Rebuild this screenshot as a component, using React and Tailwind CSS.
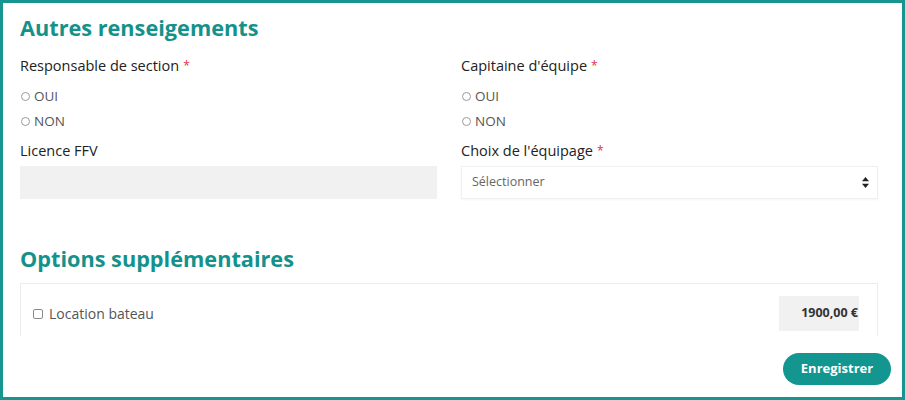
const font = { fontFamily: '"Open Sans", "Liberation Sans", sans-serif' };

const Required = () => <span className="ml-1 text-[#e0304a] text-[12px] align-top">*</span>;

const Radio = ({ label }) => (
  <label className="flex h-[25px] items-center gap-[4px] pl-[1px] text-[13.5px] text-[#555]">
    <span className="h-[9px] w-[9px] rounded-full border border-[#9a9a9a] bg-white" />
    {label}
  </label>
);

const Field = ({ title, required, children }) => (
  <div className="flex flex-col">
    <div className="h-[20px] text-[14.5px] leading-[20px] font-medium text-[#222]">
      {title}
      {required && <Required />}
    </div>
    {children}
  </div>
);

export default function App() {
  return (
    <div
      style={font}
      className="h-[400px] w-[905px] overflow-hidden border-[3px] border-[#17968f] bg-white"
    >
      <div className="pl-[17px] pr-[24px] pt-[12px]">
        <h2 className="text-[21.7px] leading-[26px] font-bold text-[#14918b]">Autres renseigements</h2>

        <div className="mt-[15px] grid grid-cols-2 gap-x-[24px]">
          <div className="flex flex-col">
            <Field title="Responsable de section" required>
              <div className="mt-[8px]">
                <Radio label="OUI" />
                <Radio label="NON" />
              </div>
            </Field>
            <div className="mt-[7px]">
              <Field title="Licence FFV">
                <input className="mt-[5px] h-[33px] w-full bg-[#f1f1f1] outline-none" />
              </Field>
            </div>
          </div>

          <div className="flex flex-col">
            <Field title="Capitaine d'équipe" required>
              <div className="mt-[8px]">
                <Radio label="OUI" />
                <Radio label="NON" />
              </div>
            </Field>
            <div className="mt-[7px]">
              <Field title="Choix de l'équipage" required>
                <div className="mt-[5px] flex h-[33px] items-center justify-between border border-[#f0f0f0] bg-white pl-[10px] pr-[8px] shadow-[0_1px_2px_rgba(0,0,0,0.04)]">
                  <span className="text-[12.5px] text-[#666]">Sélectionner</span>
                  <svg width="7" height="11" viewBox="0 0 7 11">
                    <path d="M3.5 0 L7 4.2 L0 4.2 Z" fill="#222" />
                    <path d="M3.5 11 L7 6.8 L0 6.8 Z" fill="#222" />
                  </svg>
                </div>
              </Field>
            </div>
          </div>
        </div>

        <h2 className="mt-[47px] text-[21.7px] leading-[26px] font-bold text-[#14918b]">
          Options supplémentaires
        </h2>

        <div className="mt-[11px] flex h-[53px] items-center justify-between border-x border-t border-[#ececec] pl-[12px] pr-[18px] pt-[7px]">
          <label className="flex items-center gap-[6px] text-[14px] text-[#555]">
            <span className="h-[10px] w-[10px] rounded-[2px] border border-[#8a8a8a] bg-white" />
            Location bateau
          </label>
          <div className="flex h-[35px] w-[80px] items-center justify-end bg-[#f1f1f1] pr-[1px] text-[12.5px] font-bold text-[#333]">
            1900,00 €
          </div>
        </div>
      </div>

      <div className="mt-[17px] flex justify-end pr-[11px]">
        <button className="h-[32px] w-[108px] rounded-full bg-[#139590] text-[13px] font-bold text-white">
          Enregistrer
        </button>
      </div>
    </div>
  );
}
